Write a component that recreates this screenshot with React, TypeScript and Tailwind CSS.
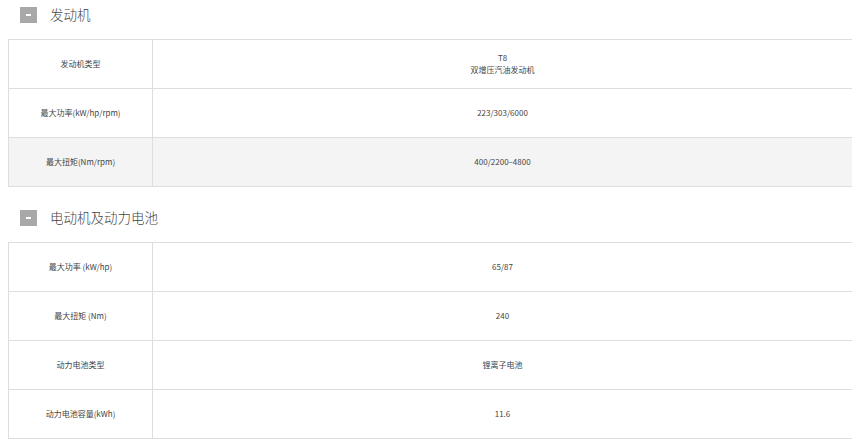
const F = { fontFamily: '"Noto Sans CJK SC", "Noto Sans", sans-serif' };

type Row = { k: string; v: React.ReactNode; gray?: boolean };

function Section({ title, rows, mt }: { title: string; rows: Row[]; mt: string }) {
  return (
    <div className={mt}>
      <div className="flex items-center h-[16px] pl-[20px]">
        <div className="w-[17px] h-[16px] bg-[#a8a8a8] flex items-center justify-center">
          <div className="w-[5px] h-[1.5px] bg-white" />
        </div>
        <span className="ml-[13px] text-[13.5px] font-light text-[#444] leading-none">{title}</span>
      </div>
      <div className="ml-[8px] mt-[16px] border-t border-l border-[#dedede]">
        {rows.map((r, i) => (
          <div key={i} className={`flex h-[49px] border-b border-[#dedede] ${r.gray ? 'bg-[#f4f4f4]' : 'bg-white'}`}>
            <div className="w-[144px] border-r border-[#dedede] flex items-center justify-center text-[8px] text-[#444]">{r.k}</div>
            <div className="flex-1 flex flex-col items-center justify-center text-[8px] text-[#444] leading-[12px]">{r.v}</div>
          </div>
        ))}
      </div>
    </div>
  );
}

export default function App() {
  return (
    <div className="w-[852px] h-[442px] bg-white overflow-hidden pt-[7px]" style={F}>
      <Section
        mt=""
        title="发动机"
        rows={[
          { k: '发动机类型', v: <><span>T8</span><span>双增压汽油发动机</span></> },
          { k: '最大功率(kW/hp/rpm)', v: '223/303/6000' },
          { k: '最大扭矩(Nm/rpm)', v: '400/2200–4800', gray: true },
        ]}
      />
      <Section
        mt="mt-[23px]"
        title="电动机及动力电池"
        rows={[
          { k: '最大功率 (kW/hp)', v: '65/87' },
          { k: '最大扭矩 (Nm)', v: '240' },
          { k: '动力电池类型', v: '锂离子电池' },
          { k: '动力电池容量(kWh)', v: '11.6' },
        ]}
      />
    </div>
  );
}
